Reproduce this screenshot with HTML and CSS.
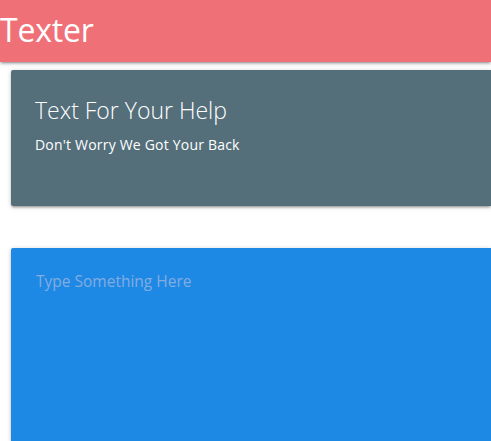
FILE: index.html
```html
<!DOCTYPE html>
<html lang="en">
<head>
<meta charset="utf-8">
<title>Texter</title>
<link rel="stylesheet" href="styles.css">
</head>
<body>
<header class="nav">
  <span class="brand">Texter</span>
</header>
<main class="page">
  <section class="card">
    <h1 class="card-title">Text For Your Help</h1>
    <p class="card-sub">Don't Worry We Got Your Back</p>
  </section>
  <section class="editor">
    <div class="placeholder">Type Something Here</div>
  </section>
</main>
</body>
</html>
```

FILE: styles.css
```css
* { box-sizing: border-box; }
html, body { margin: 0; padding: 0; }
body {
  width: 491px;
  height: 441px;
  overflow: hidden;
  background: #ffffff;
  font-family: "Open Sans", "Noto Sans", sans-serif;
  color: #fff;
}
.nav {
  height: 62px;
  background: #f07077;
  display: flex;
  align-items: center;
  box-shadow: 0 2px 2px 0 rgba(0,0,0,0.14), 0 3px 1px -2px rgba(0,0,0,0.12), 0 1px 5px 0 rgba(0,0,0,0.2);
  position: relative;
  z-index: 2;
}
.brand {
  font-size: 32px;
  line-height: 1;
  color: #fff;
  margin-top: -2px;
  letter-spacing: -0.2px;
}
.page {
  padding: 8px 0 0 11px;
  display: flex;
  flex-direction: column;
  gap: 42px;
}
.card {
  background: #546e7a;
  height: 136px;
  padding: 24px;
  border-radius: 2px 0 0 2px;
  box-shadow: 0 2px 2px 0 rgba(0,0,0,0.14), 0 3px 1px -2px rgba(0,0,0,0.12), 0 1px 5px 0 rgba(0,0,0,0.2);
}
.card-title {
  margin: 0;
  font-size: 23px;
  font-weight: 300;
  line-height: 32px;
}
.card-sub {
  margin: 9px 0 0;
  font-size: 14px;
  line-height: 20px;
  letter-spacing: 0.2px;
}
.editor {
  background: #1e88e5;
  height: 193px;
  border-radius: 2px 0 0 0;
  padding: 22px 25px;
  box-shadow: 0 2px 2px 0 rgba(0,0,0,0.14), 0 1px 5px 0 rgba(0,0,0,0.2);
}
.placeholder {
  font-size: 15.5px;
  line-height: 22px;
  color: #82ade0;
}
```
